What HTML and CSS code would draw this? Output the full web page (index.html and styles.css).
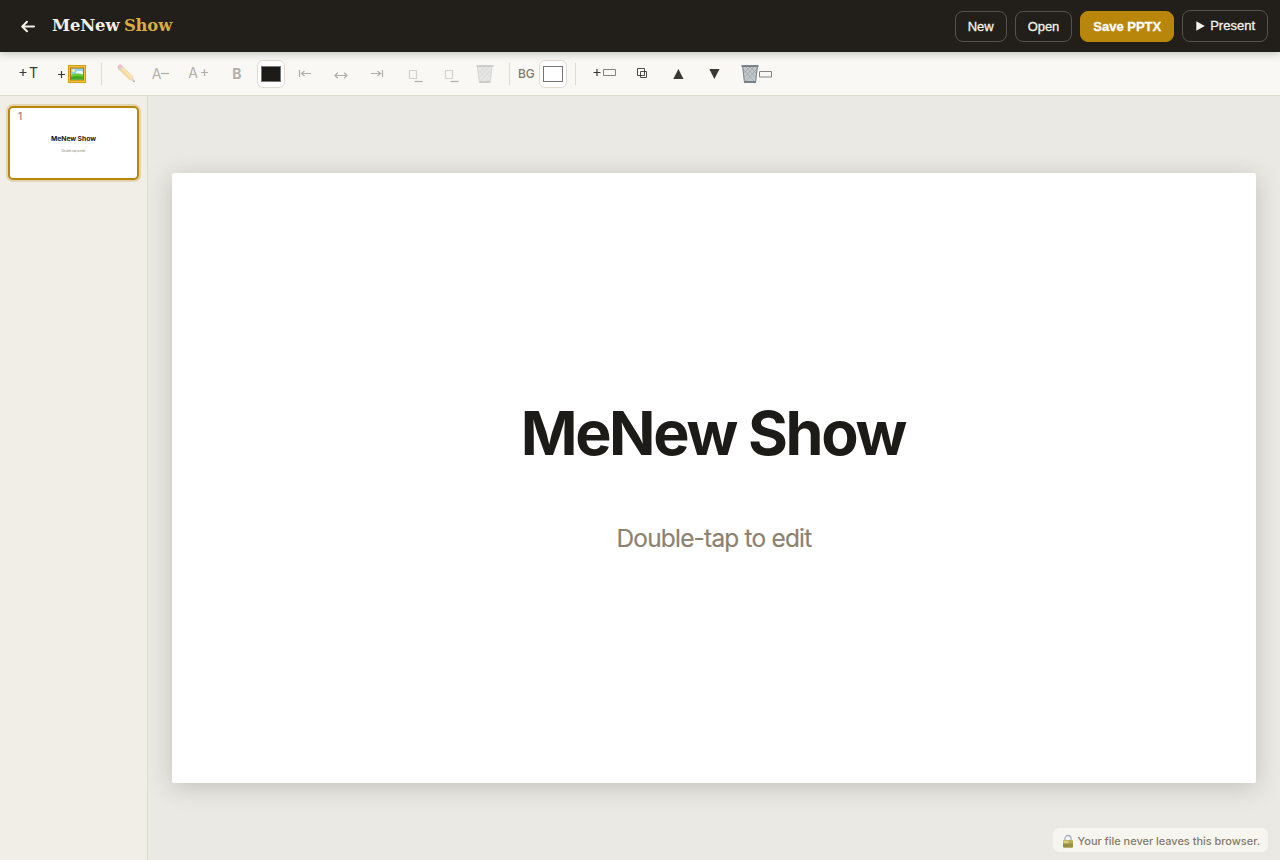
FILE: index.html
```html
<!DOCTYPE html>
<html lang="en">
<head>
    <meta charset="UTF-8">
    <meta name="viewport" content="width=device-width, initial-scale=1.0">
    <title>MeNew Show</title>
    <link rel="stylesheet" href="styles.css">
</head>
<body>
    <header class="topbar">
        <a class="back" href="#" aria-label="Back">
            <svg width="16" height="16" viewBox="0 0 16 16"><path d="M14 8.5H2.5M7 3.7L2.2 8.5L7 13.3"/></svg>
        </a>
        <h1 class="brand">MeNew <span>Show</span></h1>
        <div class="actions">
            <button class="btn">New</button>
            <button class="btn">Open</button>
            <button class="btn primary">Save PPTX</button>
            <button class="btn present"><svg width="9" height="10" viewBox="0 0 9 10"><path d="M.3 .3L8.8 5L.3 9.7Z"/></svg>Present</button>
        </div>
    </header>

    <!-- Editing tools -->
    <div class="toolbar">
        <button class="tool add-text" title="Add text"><svg width="33" height="28"><path class="line" d="M7.500 12.5h7M11 9v7"/></svg><span>T</span></button>
        <button class="tool add-image" title="Add image">
            <svg width="44" height="28" viewBox="0 0 44 28">
                <path class="line" d="M9 14.5h7M12.5 11v7"/>
                <rect x="19" y="5" width="18" height="18" fill="#d69b13"/>
                <rect x="20" y="6" width="16" height="16" fill="#f4c437"/>
                <rect x="21" y="7.5" width="14" height="13" fill="#a77815"/>
                <rect x="22" y="8.5" width="12" height="11" fill="#8fd3ee"/>
                <circle cx="24.5" cy="10.5" r="1.5" fill="#fff091"/>
                <path d="M27 12.5q1-2.5 3-1.2q2-1.5 4 .7v2.5l-7-.5z" fill="#e9f8fc"/>
                <path d="M22 15q5-2.5 12-.5v5H22z" fill="#6ccc35"/>
                <path d="M22 17q6-2 12 0v2.5H22z" fill="#45a824"/>
            </svg>
        </button>
        <i class="sep"></i>
        <button class="tool w31" disabled title="Edit">
            <svg width="31" height="28" viewBox="0 0 31 28">
                <path d="M8.500 9.500L12.300 5.700L23 16.500L19.500 20Z" fill="#f5a51e"/>
                <path d="M11.300 7.500L22 18.200" stroke="#ffd04f" stroke-width="1.6"/>
                <path d="M19.500 20L23 16.500L24.9 22.200Z" fill="#d5aa78"/>
                <path d="M22.8 21.300L24.200 20L25 22.5Z" fill="#222"/>
                <path d="M8.500 9.500L12.300 5.700L13.6 7L9.800 10.800Z" fill="#95a5b8"/>
                <path d="M8.500 9.500L12.300 5.700L10.8 4.600Q8 3.800 7.400 7Z" fill="#ea5873"/>
            </svg>
        </button>
        <button class="tool smaller" disabled>A<svg width="9" height="28"><path class="line" d="M0 13.5h8"/></svg></button>
        <button class="tool larger" disabled>A<svg width="10" height="28"><path class="line" d="M3 13.5h7M6.5 10v7"/></svg></button>
        <button class="tool bold" disabled>B</button>
        <button class="swatch" title="Text color"><i class="ink"></i></button>
        <button class="tool" disabled title="Align left"><svg width="32" height="28" viewBox="0 0 32 28"><path class="line" d="M10.5 10v7M12.5 13.5H22M15.5 11L12.5 13.5L15.5 16"/></svg></button>
        <button class="tool" disabled title="Align center"><svg width="32" height="28" viewBox="0 0 32 28"><path class="line" d="M10 15.5h12M12.8 12.8L10 15.5L12.8 18.2M19.2 12.8L22 15.5L19.2 18.2"/></svg></button>
        <button class="tool" disabled title="Align right"><svg width="32" height="28" viewBox="0 0 32 28"><path class="line" d="M21.5 10v7M10 13.5H19.5M16.5 11L19.5 13.5L16.5 16"/></svg></button>
        <button class="tool w34" disabled title="Bring forward"><svg width="34" height="28" viewBox="0 0 34 28"><path class="line faint" d="M12.5 10.5h7v8h-7z"/><path class="line" d="M17.5 21.5h8"/></svg></button>
        <button class="tool w31" disabled title="Send backward"><svg width="31" height="28" viewBox="0 0 31 28"><path class="line faint" d="M10.5 10.5h7v8h-7z"/><path class="line" d="M15.5 21.5h8"/></svg></button>
        <button class="tool w31" disabled title="Delete">
            <svg width="31" height="28" viewBox="0 0 31 28">
                <path d="M7 6H22.500L20.500 22.5H9Z" fill="#c9cccd"/>
                <path d="M7.500 9L19.500 22M10.500 7L21 18M14.500 7L21.500 14M21.500 9L9.500 22M18.500 7L8.500 18M14.500 7L7.500 14" stroke="#92989b" stroke-width=".5"/>
                <path d="M6.500 6H23.500M9 22H20.500" stroke="#686e72" stroke-width="1.5"/>
                <path d="M7.500 7L9.500 22M22 7L20 22" stroke="#9da3a6" fill="none"/>
            </svg>
        </button>
        <i class="sep"></i>
        <span class="bg-label">BG</span>
        <button class="swatch" title="Slide background"><i></i></button>
        <i class="sep"></i>
        <button class="tool w38" title="Add slide"><svg width="38" height="28" viewBox="0 0 38 28"><path class="line" d="M9.500 12.5h7M13 9v7"/><path class="line soft" d="M19.5 9.5h12v6h-12z"/></svg></button>
        <button class="tool" title="Duplicate slide"><svg width="32" height="28" viewBox="0 0 32 28"><path class="line thin" d="M11.5 8.5h7v7h-7zM14.5 11.5h6v6h-6z"/></svg></button>
        <button class="tool" title="Move up"><svg width="32" height="28" viewBox="0 0 32 28"><path class="solid" d="M16.4 9L21.5 19H11.3Z"/></svg></button>
        <button class="tool" title="Move down"><svg width="32" height="28" viewBox="0 0 32 28"><path class="solid" d="M16.4 19L11.3 9H21.5Z"/></svg></button>
        <button class="tool w46" title="Delete slide">
            <svg width="46" height="28" viewBox="0 0 46 28">
                <path d="M8 6H24L22 22.5H10Z" fill="#c3c8cb"/>
                <path d="M9 9L21 22M12 7L22 18M16 7L23 14M23 9L11 22M20 7L10 18M16 7L9 14" stroke="#858f96" stroke-width=".5"/>
                <path d="M7.5 6H24.5M10 22H22" stroke="#58636d" stroke-width="1.5"/>
                <path d="M8.7 7L10.5 22M23.3 7L21.5 22" stroke="#7c8790" fill="none"/>
                <path class="line soft" d="M25.5 11.5h12v5.500h-12z"/>
            </svg>
        </button>
    </div>

    <main class="workspace">
        <aside class="slides">
            <div class="thumb active">
                <span class="num">1</span>
                <div class="thumb-title">MeNew Show</div>
                <div class="thumb-sub">Double-tap to edit</div>
            </div>
        </aside>
        <section class="stage">
            <div class="slide">
                <div class="slide-title">MeNew Show</div>
                <div class="slide-sub">Double-tap to edit</div>
            </div>
        </section>
    </main>

    <div class="privacy">
        <svg width="12" height="14" viewBox="0 0 12 14">
            <path d="M3 7V4.500a3 3 0 0 1 6 0V7" fill="none" stroke="#a3b1c2" stroke-width="1.3"/>
            <rect x="1" y="6" width="10" height="7.500" rx="1" fill="#b7ad58"/>
            <path d="M1 9.500h10v3a1 1 0 0 1-1 1H2a1 1 0 0 1-1-1z" fill="#969044"/>
            <path d="M1.500 6.700h5v2.500h-5z" fill="#d8d083"/>
        </svg>
        <span>Your file never leaves this browser.</span>
    </div>
</body>
</html>
```
FILE: styles.css
```css
* {
    box-sizing: border-box;
}
body {
    margin: 0;
    height: 100vh;
    display: flex;
    flex-direction: column;
    overflow: hidden;
    font-family: Inter, sans-serif;
    color: #1c1b17;
    background: #eae9e4;
}
button {
    font: inherit;
    margin: 0;
    padding: 0;
    cursor: pointer;
}
svg {
    display: block;
    flex: none;
}

.topbar {
    height: 52px;
    flex: none;
    display: flex;
    align-items: center;
    padding: 0 12px 0 20px;
    background: #221e1a;
    box-shadow: 0 2px 8px rgba(0, 0, 0, 0.22);
    position: relative;
    z-index: 2;
}
.back svg {
    fill: none;
    stroke: #f4f1e9;
    stroke-width: 2;
    stroke-linecap: round;
    stroke-linejoin: round;
}
.brand {
    margin: 0 0 0 16px;
    font: bold 16.4px/24px "DejaVu Serif", serif;
    letter-spacing: -0.15px;
    word-spacing: -1px;
    color: #f4f1e9;
}
.brand span {
    color: #d9ad41;
}
.actions {
    margin-left: auto;
    display: flex;
    align-items: center;
    gap: 8px;
}
.btn {
    height: 31px;
    padding: 0 12px;
    margin-top: 1px;
    border: 1px solid #56524d;
    border-radius: 8px;
    background: transparent;
    color: #f4f1e9;
    font: 13px "Liberation Sans", sans-serif;
    letter-spacing: -0.05px;
    -webkit-text-stroke: 0.3px currentColor;
}
.btn.primary {
    border-color: #b8860b;
    background: #b8860b;
    color: #fff;
    font-weight: bold;
    letter-spacing: 0;
}
.btn.present {
    height: 32px;
    margin-top: 0;
    display: flex;
    align-items: center;
    gap: 5px;
    padding: 0 12px 1px 13px;
    letter-spacing: 0;
}
.present svg {
    fill: #f4f1e9;
}

.toolbar {
    height: 44px;
    flex: none;
    display: flex;
    align-items: center;
    gap: 4px;
    padding: 0 12px;
    background: #f9f8f4;
    border-bottom: 1px solid #dfdcd1;
}
.tool {
    width: 32px;
    height: 28px;
    flex: none;
    display: flex;
    align-items: center;
    justify-content: center;
    border: 0;
    background: none;
    color: #3a3832;
    font-size: 14px;
}
.tool:disabled {
    opacity: 0.38;
}
.line {
    fill: none;
    stroke: #3a3832;
    stroke-width: 1.2;
}
.thin {
    stroke-width: 0.9;
}
.soft {
    stroke: #85837c;
    stroke-width: 1;
}
.faint {
    stroke: #96948c;
}
.solid {
    fill: #3a3832;
}
.add-text {
    width: 33px;
    justify-content: flex-start;
}
.add-text span {
    margin: -2px 0 0 -16px;
    font-size: 14px;
}
.add-image {
    width: 44px;
}
.larger {
    width: 36px;
    padding: 0 2px 2px 0;
}
.bold {
    font-weight: bold;
}
.w31 {
    width: 31px;
}
.w34 {
    width: 34px;
}
.w38 {
    width: 38px;
}
.w46 {
    width: 46px;
}
.sep {
    width: 1px;
    height: 22px;
    margin: 0 4px;
    flex: none;
    background: #dfdcd1;
}
.bg-label {
    width: 17px;
    font-size: 12px;
    font-weight: 500;
    letter-spacing: -0.2px;
    color: #837b68;
}
.swatch {
    width: 28px;
    height: 28px;
    flex: none;
    display: grid;
    place-items: center;
    border: 1px solid #e3dbcf;
    border-radius: 6px;
    background: #fff;
}
.swatch i {
    width: 20px;
    height: 16px;
    border: 1px solid #767676;
    background: #fff;
}
.swatch .ink {
    background: #1c1b17;
}

.workspace {
    flex: 1;
    min-height: 0;
    display: flex;
}
.slides {
    width: 148px;
    flex: none;
    padding: 10px 8px;
    background: #f1eee7;
    border-right: 1px solid #dfdcd1;
}
.thumb {
    height: 74px;
    position: relative;
    padding-top: 26px;
    border: 2px solid #b8860b;
    border-radius: 5px;
    background: #fff;
    box-shadow: 0 0 0 2px rgba(184, 134, 11, 0.25);
    text-align: center;
}
.num {
    position: absolute;
    left: 8px;
    top: 2px;
    font-size: 10px;
    line-height: 12px;
    font-weight: 500;
    color: #8b826f;
}
.thumb-title {
    font-size: 6.8px;
    line-height: 10px;
    font-weight: bold;
    letter-spacing: -0.05px;
}
.thumb-sub {
    margin-top: 5px;
    font-size: 2.9px;
    line-height: 4px;
    letter-spacing: -0.08px;
    color: #8b826f;
}
.stage {
    flex: 1;
    display: flex;
    align-items: center;
    padding: 0 24px;
}
.slide {
    width: 100%;
    aspect-ratio: 16 / 9;
    display: flex;
    flex-direction: column;
    align-items: center;
    padding-top: 223px;
    border-radius: 2px;
    background: #fff;
    box-shadow: 0 4px 24px rgba(60, 50, 30, 0.22);
}
.slide-title {
    font-size: 61px;
    line-height: 74px;
    font-weight: bold;
    letter-spacing: -2.35px;
    margin-right: 2.35px;
    white-space: nowrap;
}
.slide-sub {
    margin-top: 53px;
    font-size: 24.4px;
    line-height: 30px;
    letter-spacing: -0.77px;
    color: #8b826f;
    -webkit-text-stroke: 0.2px currentColor;
}

.privacy {
    position: fixed;
    right: 12px;
    bottom: 8px;
    height: 24px;
    display: flex;
    align-items: center;
    gap: 4px;
    padding: 2px 8px 0 9px;
    border-radius: 6px;
    background: #f7f5f0;
    color: #837b68;
    font-size: 11px;
    font-weight: 500;
    letter-spacing: -0.03px;
    white-space: nowrap;
}
```
